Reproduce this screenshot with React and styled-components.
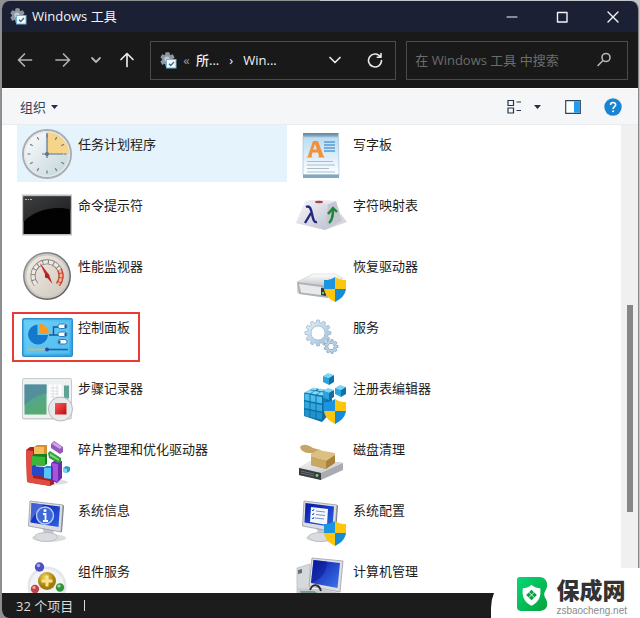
import React from "react";
import styled, { createGlobalStyle } from "styled-components";

const uiFont = `"Open Sans", "Noto Sans CJK SC", sans-serif`;

const GlobalStyle = createGlobalStyle`
  *, *::before, *::after { box-sizing: border-box; }
  html, body, #root { height: 100%; }
  body {
    margin: 0;
    background: linear-gradient(90deg, #8f9092 50%, #c3c5cb 50%);
    font: 13px/20px ${uiFont};
    overflow: hidden;
  }
  button, input { font: inherit; color: inherit; }
`;

const Page = styled.div`
  position: relative;
  display: flex;
  height: 100%;
  padding: 1px 1px 0;
`;

const Window = styled.main`
  flex: 1;
  min-width: 0;
  display: flex;
  flex-direction: column;
  border: solid #8b8b8b;
  border-width: 0 1px;
  border-radius: 8px;
  overflow: hidden;
  background: #fff;
`;

const TitleBar = styled.header`
  display: flex;
  align-items: center;
  height: 31px;
  padding-left: 8px;
  background: #1b2034;
  color: #f4f5f8;
`;

const Title = styled.h1`
  flex: 1;
  margin: 0 0 2px 5px;
  font-size: 13px;
  font-weight: 400;
`;

const IconButton = styled.button`
  display: flex;
  align-items: center;
  justify-content: center;
  flex: none;
  width: ${(p) => p.$width}px;
  height: 30px;
  padding: 0;
  border: 0;
  background: none;
  color: ${(p) => p.$color || "inherit"};
`;

const NavBar = styled.nav`
  display: flex;
  align-items: center;
  height: 56px;
  padding: 0 10px 0 4px;
  background: #191919;
  color: #e8e8e8;
`;

const Field = styled.div`
  display: flex;
  align-items: center;
  min-width: 0;
  height: 39px;
  flex: ${(p) => p.$grow} 1 0;
  margin-left: ${(p) => p.$gap}px;
  padding-left: ${(p) => p.$pad}px;
  border: 1px solid #4b4b4b;
`;

const Crumb = styled.a`
  color: #f2f2f2;
  text-decoration: none;
  font-weight: 500;
`;

const CrumbMark = styled.span`
  width: ${(p) => p.$width}px;
  text-align: center;
  color: ${(p) => p.$color};
`;

const Spacer = styled.div`
  flex: 1;
`;

const SearchInput = styled.input`
  flex: 1;
  min-width: 0;
  padding: 0;
  border: 0;
  outline: 0;
  background: none;
  color: #eee;
  &::placeholder { color: #6c6c6c; opacity: 1; }
`;

const CommandBar = styled.div`
  display: flex;
  align-items: center;
  height: 37px;
  padding: 0 7px 0 18px;
  border-top: 1px solid #fff;
  border-bottom: 1px solid #ececee;
  background: #f5f6f8;
  color: #33435f;
`;

const MenuButton = styled.button`
  display: flex;
  align-items: center;
  gap: 5px;
  padding: 0;
  border: 0;
  background: none;
`;

const Body = styled.div`
  flex: 1;
  min-height: 0;
  display: flex;
`;

const ToolGrid = styled.ul`
  flex: 1;
  min-width: 0;
  margin: 0;
  padding: 0 0 0 15px;
  list-style: none;
  display: grid;
  grid-template-columns: repeat(auto-fill, 270px);
  grid-auto-rows: 57px;
  gap: 4px 5px;
  overflow: hidden;
`;

const ToolCell = styled.li`
  position: relative;
`;

const ToolButton = styled.button`
  display: flex;
  align-items: flex-start;
  gap: 4px;
  width: 100%;
  height: 100%;
  padding: 2px 5px;
  border: 0;
  background: ${(p) => (p.$selected ? "#e5f3fd" : "none")};
  color: #1c1c1c;
  text-align: left;
`;

const ToolIcon = styled.svg`
  flex: none;
  width: 52px;
  height: 52px;
  overflow: visible;
`;

const ToolName = styled.span`
  padding-top: 7px;
  white-space: nowrap;
`;

const Marker = styled.span`
  position: absolute;
  left: -5px;
  top: 4px;
  width: 128px;
  height: 50px;
  border: 2px solid #ea3a34;
  pointer-events: none;
`;

const ScrollTrack = styled.div`
  width: 17px;
  background: #f0f0f0;
  display: grid;
  grid-template-rows: 180fr 207fr 81fr;
  justify-content: center;
`;

const ScrollThumb = styled.div`
  grid-row: 2;
  width: 6px;
  background: #868686;
`;

const StatusBar = styled.footer`
  display: flex;
  align-items: center;
  gap: 11px;
  height: 25px;
  padding-left: 14px;
  background: #1c1c1c;
  color: #dcdcdc;
`;

const StatusRule = styled.span`
  width: 1px;
  height: 11px;
  background: #dcdcdc;
`;

const SiteBadge = styled.aside`
  position: absolute;
  right: 0;
  bottom: 0;
  display: flex;
  align-items: center;
  gap: 8px;
  height: 50px;
  padding: 3px 13px 0 26px;
  border-top-left-radius: 40px;
  background: #fff;
`;

const SiteText = styled.div`
  display: flex;
  flex-direction: column;
`;

const SiteName = styled.strong`
  font: 900 23px/33px "Noto Sans CJK SC", sans-serif;
  color: #333;
`;

const SiteUrl = styled.span`
  font: 10px/10px "Liberation Sans", sans-serif;
  color: #8a8a8a;
`;

const Stroke = ({ d, size = 16, width = 1.4 }) => (
  <svg width={size} height={size} viewBox="0 0 16 16" fill="none" stroke="currentColor" strokeWidth={width} strokeLinecap="round" strokeLinejoin="round" aria-hidden="true">
    <path d={d} />
  </svg>
);

const Caret = () => (
  <svg width="7" height="4" viewBox="0 0 7 4" aria-hidden="true">
    <path d="M0 0h7L3.5 4z" fill="#1f2f4d" />
  </svg>
);

const ToolsLogo = () => (
  <svg width="17" height="17" viewBox="0 0 17 17" aria-hidden="true">
    <g fill="#8d97a1">
      <circle cx="7.5" cy="7.5" r="5.4" />
      {[0, 60, 120].map((a) => (
        <rect key={a} x="5.300" y="0.300" width="4.400" height="14.400" rx="1" transform={`rotate(${a} 7.5 7.5)`} />
      ))}
    </g>
    <circle cx="7" cy="7" r="2.6" fill="#c3cbd2" />
    <rect x="6.5" y="7.5" width="9.5" height="8.5" fill="#f3fbff" stroke="#76b4d3" />
    <path d="M9 11.8l1.7 1.7L14 10" fill="none" stroke="#2e6d96" strokeWidth="1.3" />
  </svg>
);

const Gradient = ({ id, from, to, x2 = 1, y2 = 1 }) => (
  <linearGradient id={id} x1="0" y1="0" x2={x2} y2={y2}>
    <stop offset="0" stopColor={from} />
    <stop offset="1" stopColor={to} />
  </linearGradient>
);

const Shield = () => (
  <g>
    <path d="M38 28c-3.500 2.500-7 3-11 3v9h11z" fill="#1b95e0" />
    <path d="M38 28c3.500 2.500 7 3 11 3v9H38z" fill="#fdc50c" />
    <path d="M27 40c1 6 5 10 11 13V40z" fill="#fdc50c" />
    <path d="M49 40c-1 6-5 10-11 13V40z" fill="#168bd8" />
  </g>
);

const gearPath = (cx, cy, outer, inner, teeth) => {
  const points = [];
  const step = (Math.PI * 2) / teeth;
  for (let i = 0; i < teeth; i += 1) {
    [[-0.34, inner], [-0.2, outer], [0.2, outer], [0.34, inner]].forEach(([t, r]) => {
      const a = (i + t) * step;
      points.push(`${(cx + Math.cos(a) * r).toFixed(2)} ${(cy + Math.sin(a) * r).toFixed(2)}`);
    });
  }
  return `M${points.join("L")}Z`;
};

const Clock = () => (
  <g>
    <defs><Gradient id="clockFace" from="#ffffff" to="#bfd2d8" /></defs>
    <circle cx="25" cy="27" r="24" fill="url(#clockFace)" stroke="#a9adb2" strokeWidth="2" />
    <circle cx="25" cy="27" r="22.300" fill="none" stroke="#e3e8ea" strokeWidth="1.500" />
    <path d="M25 27V5a22 22 0 0 1 22 22z" fill="#f6d58b" />
    {Array.from({ length: 12 }, (_, i) => (
      <path key={i} d="M25 7.500v3" stroke="#6c7984" strokeWidth="1.200" transform={`rotate(${i * 30} 25 27)`} />
    ))}
    <path d="M25 6v25M20 27h21" stroke="#5a748a" strokeWidth="1.200" />
    <circle cx="25" cy="27" r="2" fill="#5b7488" />
  </g>
);

const Terminal = () => (
  <g>
    <defs><Gradient id="termGloss" from="#3d3f41" to="#1c1c1d" /></defs>
    <path d="M0 6.500h50v41H0z" fill="#bfc0c2" />
    <path d="M1.500 8.500h47V46h-47z" fill="#020202" />
    <path d="M1.500 8.500h47v13C30 17 10 24 1.500 34z" fill="url(#termGloss)" />
    <path d="M3 11.500h2m1 0h1m1 0h2" stroke="#b8b8b8" />
  </g>
);

const Gauge = () => (
  <g>
    <defs><Gradient id="gaugeRim" from="#9a9a98" to="#55565a" /><Gradient id="gaugeFace" from="#f1ece5" to="#cfc8bd" /></defs>
    <circle cx="25" cy="27" r="24" fill="url(#gaugeRim)" />
    <circle cx="25" cy="27" r="22.500" fill="#c9c8c5" />
    <circle cx="25" cy="27" r="20.500" fill="url(#gaugeFace)" />
    <path d="M14 35.500a14 14 0 1 1 22 0" fill="none" stroke="#85817d" strokeWidth="5" />
    <path d="M14 35.500a14 14 0 1 1 22 0" fill="none" stroke="#eee9e2" strokeWidth="3.400" strokeDasharray="4.500 1" />
    <path d="M37.500 20.500a14 14 0 0 1-1.500 15" fill="none" stroke="#c9452d" strokeWidth="5" />
    <path d="M37.500 20.500a14 14 0 0 1-1.500 15" fill="none" stroke="#f0b79f" strokeWidth="2.600" strokeDasharray="3.500 1" />
    <path d="M17.500 13.500L27 25.500l3.500 9.500-6.500-7.500z" fill="#c5282b" />
    <circle cx="25" cy="27" r="2.200" fill="#a4262b" />
  </g>
);

const ControlPanel = () => (
  <g>
    <defs><Gradient id="cpFace" from="#63cdf8" to="#38a9e6" /></defs>
    <rect y="8" width="51" height="39" rx="2" fill="#2e8fcb" />
    <rect x="1.500" y="9.500" width="48" height="36" rx="1" fill="url(#cpFace)" />
    <path d="M3.500 11.500h44v32h-44z" fill="#7bd5fa" opacity=".4" />
    <path d="M15.500 14.500a10 10 0 1 0 10.500 10.500H15.500z" fill="#1379cd" />
    <path d="M17 13.500a10.500 10.500 0 0 1 10 10H17z" fill="#f79a28" />
    <path d="M27 25h4.500v-8H36M31.500 25H36" fill="none" stroke="#135a94" strokeWidth="1.400" />
    <rect x="36" y="14" width="9" height="4.500" rx="2.200" fill="#fff" stroke="#2c7ab4" />
    <rect x="36" y="22" width="9" height="4.500" rx="2.200" fill="#fff" stroke="#2c7ab4" />
    <rect x="36" y="29.500" width="9" height="4.500" rx="2.200" fill="#fff" stroke="#2c7ab4" />
    <path d="M43.500 15v3M43.500 23v3M37.500 30.500v3" stroke="#145b98" strokeWidth="2" />
    <path d="M6 39.500h18" stroke="#edb24f" strokeWidth="1.600" />
    <path d="M25 39.500h21" stroke="#1568af" strokeWidth="1.600" />
    <circle cx="25" cy="39.500" r="2" fill="#274fa3" />
  </g>
);

const Recorder = () => (
  <g>
    <defs><Gradient id="recScreen" from="#4da3a8" to="#57aa72" y2={1} x2={0.4} /><Gradient id="recStop" from="#ff5a52" to="#b80d18" /></defs>
    <rect x="0" y="7" width="50" height="41.500" rx="2" fill="#c7ccce" />
    <rect x="1" y="8" width="48" height="39" rx="1" fill="#eef1f1" />
    <path d="M2.500 13.500H24.500v30h-22z" fill="url(#recScreen)" />
    <path d="M2.500 13.500h22v9c-8 1-17 6-22 12z" fill="#54839f" opacity=".65" />
    <path d="M26.500 13.500h13v20h-13z" fill="#fff" />
    <path d="M28 17h9M28 20h9M28 23h9M28 26h6M31 14v15M35 14v12" stroke="#d3dada" strokeWidth=".8" />
    <path d="M42 14.500h5v13h-5z" fill="#61a296" />
    <circle cx="38.500" cy="38" r="12" fill="#e8e9eb" stroke="#b7b9bd" />
    <path d="M33 32h11.500v11.500H33z" fill="url(#recStop)" />
  </g>
);

const Defrag = () => (
  <g>
    <ellipse cx="26" cy="50" rx="20" ry="3" fill="#bbb" opacity=".5" />
    <path d="M4 18l4-3h6v28l18 3v6l-4 2L5 50z" fill="#a8201f" />
    <path d="M4 18l7 1v27l17 3v5L5 50z" fill="#e04c40" />
    <path d="M12 15l3-2h10v12H12z" fill="#d98f2f" />
    <path d="M12 15h10v11H12z" fill="#f6bd5c" />
    <path d="M10 24l2-2h13v10l-3 2-12-1z" fill="#17801d" />
    <path d="M10 24l13 1v9l-13-1z" fill="#3db53a" />
    <path d="M10 34l13 1v10l-13-2z" fill="#2549c7" />
    <path d="M22 36l2-2h8v10l-2 3-8-1z" fill="#2389dd" />
    <path d="M22 36h8v11l-8-1z" fill="#58c4fa" />
    <path d="M29 31l3-2h8v17l-5 5-6-3z" fill="#6d2aae" />
    <path d="M29 31l7 1v18l-5-2V36z" fill="#a355dc" />
    <path d="M26 21l2-2 11 7v4l-3 1-9-5z" fill="#2d9d40" />
    <path d="M28 21l9 6v2l-9-5z" fill="#7fd47c" />
    <path d="M29 12l3-3 9 6v5l-3 2-9-6z" fill="#9658bb" />
    <path d="M30 12l2-2 8 5-2 2z" fill="#d4a3e8" />
    <path d="M41 36l3-2 4 1v4l-3 2-4-1z" fill="#2c9ccb" />
    <path d="M41 36l4 1v4l-4-1z" fill="#7ed5ef" />
  </g>
);

const MonitorBase = ({ id }) => (
  <g>
    <defs><Gradient id={id} from="#0715a8" to="#2d65e4" /></defs>
    <ellipse cx="27" cy="45" rx="17" ry="4" fill="#bbb" opacity=".5" />
    <path d="M20 34l11 2 1 7h-9z" fill="#c5c8cd" />
    <ellipse cx="24" cy="44" rx="11.500" ry="4.500" fill="#d9dbdf" stroke="#adb0b7" strokeWidth=".7" />
    <path d="M8 8l33 4-2 27-32.500-6z" fill="#dcdde2" stroke="#979ba5" strokeWidth=".8" />
    <path d="M41 12l1 1-2 26h-1z" fill="#7c808a" />
    <path d="M9.500 10L38 13.500 36.500 34 8.500 29.500z" fill={`url(#${id})`} />
  </g>
);

const SystemInfo = () => (
  <g>
    <MonitorBase id="infoScreen" />
    <path d="M9.500 10l12 1.500c-4 4-9 10-13 17z" fill="#7394ee" opacity=".55" />
    <circle cx="23" cy="22.500" r="8.500" fill="#3f69d6" stroke="#b9cff8" strokeWidth="1.400" />
    <circle cx="23" cy="17.500" r="1.500" fill="#fff" />
    <path d="M21 21h2.500v7m-2.500 0h5" stroke="#fff" strokeWidth="1.800" fill="none" />
  </g>
);

const ComponentServices = () => (
  <g>
    <defs>
      <radialGradient id="goldBall" cx=".4" cy=".3"><stop offset="0" stopColor="#f3d65c" /><stop offset="1" stopColor="#a47b0c" /></radialGradient>
    </defs>
    <circle cx="25" cy="32" r="19.500" fill="#e5e6ea" />
    <circle cx="25" cy="32" r="17" fill="#f2f3f5" />
    <circle cx="25" cy="27" r="9" fill="url(#goldBall)" />
    <path d="M25 21.500v11M19.500 27h11" stroke="#fbe58a" strokeWidth="3" />
    <circle cx="17.500" cy="13" r="4.700" fill="#4d50bd" /><circle cx="16.500" cy="11.500" r="1.800" fill="#a4a6ee" />
    <circle cx="13" cy="35" r="4.200" fill="#bd444a" /><circle cx="12" cy="33.500" r="1.600" fill="#f1a5a5" />
    <circle cx="38" cy="33.500" r="4.200" fill="#32953b" /><circle cx="37" cy="32" r="1.600" fill="#a2e3a0" />
  </g>
);

const WordPad = () => (
  <g>
    <defs><Gradient id="padFace" from="#b9dcf3" to="#ffffff" x2={0} /><Gradient id="padEdge" from="#5d87a4" to="#9db8ca" x2={0} /></defs>
    <path d="M6 6h35.500v5H6z" fill="url(#padEdge)" />
    <path d="M6 10h35.500l.5 38H6z" fill="url(#padFace)" stroke="#abc7d8" strokeWidth=".8" />
    <path d="M6 47.500h36V51H6z" fill="#84a8bd" />
    <path d="M9.500 30.500l1.500-1.500 5-15h5l5.500 15 1.500 1.500h-7l1-1.500-1-3.500h-5.500l-1 3.500 1 1.500zm6.500-8h4l-2-5.500z" fill="#f2913a" fillRule="evenodd" />
    <path d="M27 15h11M27 18h11M27 21h11M27 24h11" stroke="#559bd4" strokeWidth="1.500" />
    <path d="M10 34.500h26M10 38h28M10 41.500h22M10 45h28" stroke="#a9bfcd" strokeWidth="1" />
  </g>
);

const CharMap = () => (
  <g>
    <defs><Gradient id="keyFace" from="#f8f8fb" to="#bfc2d1" /></defs>
    <path d="M28 42l22-8-6-8z" fill="#aaa" opacity=".45" />
    <path d="M8 14l6-2 25 1 6 20-17 9-29-7z" fill="#dfe0e8" />
    <path d="M8 14l23 2-3 26-29-7z" fill="url(#keyFace)" />
    <path d="M31 16l8-3 6 20-17 9z" fill="#c5c7d5" />
    <path d="M8 14l6-2 25 1-8 3z" fill="#e9eaf0" />
    <ellipse cx="22" cy="14" rx="4" ry="1.200" fill="#a7424b" />
    <path d="M9 19c4-2 5 2 6 7s2 9 5 8M14 25l-6 10" fill="none" stroke="#23267f" strokeWidth="2.400" />
    <path d="M32 35c4-3 4-9 4-15m-5 6l5-6 4 4" fill="none" stroke="#20853b" strokeWidth="2.400" />
  </g>
);

const RecoveryDrive = () => (
  <g>
    <defs><Gradient id="driveTop" from="#ffffff" to="#c4c6ca" x2={0} /></defs>
    <path d="M0 33l16-8h21l8 4v8l-12 12L0 44z" fill="#d5d7da" />
    <path d="M0 33l16-8h22l8 4-13 8z" fill="url(#driveTop)" stroke="#d0d1d4" strokeWidth=".6" />
    <path d="M0 33l32 4-1 12L2 45z" fill="#aeb0b4" />
    <path d="M2 35l22 3v8L4 43.500z" fill="#e8e9eb" />
    <path d="M24 39l5 .6v7.500L24 46z" fill="#333" /><circle cx="26" cy="44" r="1.200" fill="#52d36a" />
    <Shield />
  </g>
);

const Services = () => (
  <g fillRule="evenodd">
    <defs><Gradient id="gearFill" from="#e6f2fb" to="#9bbcd8" /></defs>
    <path d={`${gearPath(21, 23, 13, 10.3, 12)}M21 16a7 7 0 1 0 .01 0z`} fill="url(#gearFill)" stroke="#a1bdd3" strokeWidth=".9" />
    <path d={`${gearPath(34, 36.500, 7, 5.300, 9)}M34 33.300a3.200 3.200 0 1 0 .01 0z`} fill="#bad3e7" stroke="#89a6be" strokeWidth=".9" />
  </g>
);

const Cube = ({ x, y }) => (
  <g transform={`translate(${x} ${y})`}>
    <path d="M0 3l5-3 6 2-5 3z" fill="#7bd5f4" />
    <path d="M0 3l6 2v7L0 9z" fill="#2ca4da" />
    <path d="M6 5l5-3v7l-5 3z" fill="#136fa9" />
  </g>
);

const Registry = () => (
  <g>
    <path d="M7 22l9-5 19 3v20l-10 11L7 45z" fill="#0f6ea8" />
    <path d="M8 21.500l4-2.500 5 1-4 2.500zM14 22.500l4-2.500 5 1-4 2.500zM20 23.500l4-2.500 5 1-4 2.500zM13 18.500l3-2 5 1-3 2zM20 19.500l3-2 5 1-3 2z" fill="#86dcf7" />
    {[0, 1, 2].map((row) => (
      <path
        key={row}
        transform={`translate(0 ${row * 8})`}
        d="M7.500 22.500l5 1v6.500l-5-1zM13.500 23.700l5 1v6.500l-5-1zM19.500 25l5.500 1v6.500l-5.500-1z"
        fill={["#4bbfe9", "#30a8dd", "#1f93cd"][row]}
      />
    ))}
    <path d="M26 25l4-3v6.500l-4 3zM31 21.500l4-2.500v6.500L31 28zM26 33l4-3v6l-4 3z" fill="#1a7fb8" />
    <Cube x={26} y={2} />
    <Cube x={38} y={14} />
    <Cube x={26} y={17} />
    <Shield />
  </g>
);

const DiskCleanup = () => (
  <g>
    <defs><Gradient id="diskTop" from="#f6f6f7" to="#c4c5c9" /></defs>
    <path d="M2 36l15-9 29 4v7L24 48 2 43z" fill="#a9abb0" />
    <path d="M2 36l15-9 29 4-22 10z" fill="url(#diskTop)" />
    <path d="M2 36l22 5v7L2 43z" fill="#393b3e" />
    <path d="M4 39l13 3M4 41l13 3" stroke="#777b80" strokeWidth=".8" /><circle cx="20" cy="43.500" r="1.400" fill="#71d577" />
    <path d="M3 15c3-4 9-2 13 1l8 2-2 5-9-2c-5 0-9-2-10-6z" fill="#c6a568" />
    <path d="M14 22l7-4 17 3-1 8-8 4-15-4z" fill="#dcc083" />
    <path d="M14 25l15 4 9-6v8l-9 6-15-4z" fill="#a9823f" />
    <path d="M14 25l15 4v8l-15-4z" fill="#c9a95f" />
  </g>
);

const SystemConfig = () => (
  <g>
    <g transform="translate(-1 0)">
      <MonitorBase id="configScreen" />
      <path d="M15 14l17 2-1 16-17-3z" fill="#f5f8ff" />
      <path d="M20 18l9 1M20 21.500l9 1M19 25l9 1" stroke="#7c8fbb" />
      <path d="M16 17l1 1 1-2M16 21l1 1 1-2M16 25l1 1 1-2" fill="none" stroke="#2c5fc5" />
    </g>
    <Shield />
  </g>
);

const ComputerManagement = () => (
  <g>
    <defs><Gradient id="mgmtScreen" from="#0b16a8" to="#3c77ea" /></defs>
    <path d="M0 14l13-4v26l-13 4z" fill="#d6d9dc" stroke="#b3b7bb" strokeWidth=".7" />
    <path d="M1 16l4-1v4l-4 1z" fill="#686d73" />
    <path d="M0 34l24 1 24 5H0z" fill="#c6cbcc" />
    <path d="M15 4l31 3-3 31-31-6z" fill="#dcdee3" stroke="#9a9ea7" strokeWidth=".8" />
    <path d="M16.500 6L43 9l-2.500 25-26.500-5z" fill="url(#mgmtScreen)" />
    <path d="M16.500 6L30 7.500c0 9-5 18-16 21.500z" fill="#0a1590" opacity=".5" />
    <path d="M13 36c3-7 9-6 11 1" fill="none" stroke="#2b2d30" strokeWidth="1.800" />
    <path d="M3 37h14l5 3H4z" fill="#7f9a8e" />
  </g>
);

const tools = [
  ["任务计划程序", Clock], ["写字板", WordPad],
  ["命令提示符", Terminal], ["字符映射表", CharMap],
  ["性能监视器", Gauge], ["恢复驱动器", RecoveryDrive],
  ["控制面板", ControlPanel], ["服务", Services],
  ["步骤记录器", Recorder], ["注册表编辑器", Registry],
  ["碎片整理和优化驱动器", Defrag], ["磁盘清理", DiskCleanup],
  ["系统信息", SystemInfo], ["系统配置", SystemConfig],
  ["组件服务", ComponentServices], ["计算机管理", ComputerManagement],
];

const SiteLogo = () => (
  <svg width="31" height="35" viewBox="0 0 32 36" aria-hidden="true">
    <defs><Gradient id="siteGreen" from="#06d878" to="#07a23a" /></defs>
    <path d="M3 0h20c6 0 9 5 8 10-.5 3-3 5-3 8s3 5 3 8c1 5-2 9-8 9H4c-3 0-4-2-4-4V3c0-2 1-3 3-3z" fill="url(#siteGreen)" />
    <path d="M15 8c3 3 6 3.500 9 3.500 1 8-1 14-9 18-8-4-10-10-9-18 3 0 6-.5 9-3.500z" fill="#fff" />
    <path d="M15 13l5.500 5.500L15 24l-5.500-5.500z" fill="#0b9e47" />
    <path d="M12.300 15.700l5.500 5.500M17.800 15.700l-5.500 5.500" stroke="#fff" strokeWidth=".9" />
  </svg>
);

export default function App() {
  return (
    <Page>
      <GlobalStyle />
      <Window>
        <TitleBar>
          <ToolsLogo />
          <Title>Windows 工具</Title>
          <IconButton $width={50} aria-label="最小化"><Stroke d="M3 8h10" width={1.200} /></IconButton>
          <IconButton $width={50} aria-label="最大化"><Stroke d="M3.500 3.500h9.500v9.500H3.500z" /></IconButton>
          <IconButton $width={51} aria-label="关闭"><Stroke d="M3 3l10 10M13 3L3 13" /></IconButton>
        </TitleBar>
        <NavBar>
          <IconButton $width={38} $color="#b0b0b0" aria-label="后退"><Stroke d="M14.500 8H1.500M7.500 2l-6 6 6 6" width={1.700} /></IconButton>
          <IconButton $width={38} $color="#b0b0b0" aria-label="前进"><Stroke d="M1 8h13.500M8.500 2l6 6-6 6" width={1.700} /></IconButton>
          <IconButton $width={28} $color="#b5b5b5" aria-label="最近位置"><Stroke d="M4 6l4 4 4-4" width={1.800} /></IconButton>
          <IconButton $width={34} aria-label="上移"><Stroke d="M8 14.500V1.500M2 7.500l6-6 6 6" width={1.700} /></IconButton>
          <Field $grow={10} $gap={6} $pad={9}>
            <ToolsLogo />
            <CrumbMark $width={19} $color="#9c9c9c">«</CrumbMark>
            <Crumb href="#all">所...</Crumb>
            <CrumbMark $width={24} $color="#f2f2f2">›</CrumbMark>
            <Crumb href="#tools">Win...</Crumb>
            <Spacer />
            <IconButton $width={40} aria-label="展开地址"><Stroke d="M3 5.500l5 5 5-5" width={1.700} /></IconButton>
            <IconButton $width={40} aria-label="刷新"><Stroke d="M13.500 5A6.500 6.500 0 1 0 14.500 8.500M14 1.500v3.700h-3.700" width={1.600} /></IconButton>
          </Field>
          <Field as="label" $grow={9} $gap={10} $pad={8}>
            <SearchInput aria-label="搜索" placeholder="在 Windows 工具 中搜索" />
            <IconButton as="span" $width={46} $color="#b5b5b5"><Stroke d="M14 5.500a4 4 0 1 1-8 0 4 4 0 1 1 8 0M7 8.500l-5 5" width={1.600} /></IconButton>
          </Field>
        </NavBar>
        <CommandBar>
          <MenuButton>组织<Caret /></MenuButton>
          <Spacer />
          <IconButton $width={18} aria-label="视图">
            <svg width="15" height="15" viewBox="0 0 15 15" fill="none" stroke="#26354d" strokeWidth="1.200" aria-hidden="true">
              <path d="M1 1.500h5.500v5H1zM1 9h5.500v5H1zM9.500 3H14M9.500 11.500H14" />
            </svg>
          </IconButton>
          <IconButton $width={28} aria-label="更多视图"><Caret /></IconButton>
          <IconButton $width={44} aria-label="预览窗格">
            <svg width="16" height="14" viewBox="0 0 16 14" aria-hidden="true">
              <path d="M.7.7h14.600v12.600H.7z" fill="#fff" stroke="#33435f" strokeWidth="1.200" />
              <path d="M9 1.200h5.900v11.600H9z" fill="#219cec" />
            </svg>
          </IconButton>
          <IconButton $width={36} aria-label="帮助">
            <svg width="18" height="18" viewBox="0 0 18 18" fill="none" aria-hidden="true">
              <circle cx="9" cy="9" r="8.700" fill="#1a84d4" />
              <path d="M6.500 7c0-3.400 5.200-3.200 5.200-.3 0 1.900-2.600 2-2.600 4.200" stroke="#fff" strokeWidth="1.500" />
              <circle cx="9.100" cy="13.200" r="1" fill="#fff" />
            </svg>
          </IconButton>
        </CommandBar>
        <Body>
          <ToolGrid>
            {tools.map(([name, Drawing], i) => (
              <ToolCell key={name}>
                <ToolButton $selected={i === 0}>
                  <ToolIcon viewBox="0 0 52 52" aria-hidden="true"><Drawing /></ToolIcon>
                  <ToolName>{name}</ToolName>
                </ToolButton>
                {name === "控制面板" && <Marker />}
              </ToolCell>
            ))}
          </ToolGrid>
          <ScrollTrack><ScrollThumb /></ScrollTrack>
        </Body>
        <StatusBar>32 个项目<StatusRule /></StatusBar>
      </Window>
      <SiteBadge>
        <SiteLogo />
        <SiteText>
          <SiteName>保成网</SiteName>
          <SiteUrl>zsbaocheng.net</SiteUrl>
        </SiteText>
      </SiteBadge>
    </Page>
  );
}
